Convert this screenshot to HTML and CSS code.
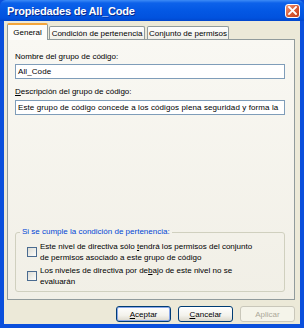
FILE: index.html
```html
<!DOCTYPE html>
<html lang="es">
<head>
	<meta charset="UTF-8">
	<meta name="viewport" content="width=device-width, initial-scale=1.0">
	<link rel="stylesheet" href="styles.css">
	<title>Propiedades de All_Code</title>
</head>
<body>
	<div class="window">
		<div class="titlebar">
			<span class="title">Propiedades de All_Code</span>
			<span class="close">
				<svg width="9" height="9" viewBox="0 0 9 9">
					<path d="M1 1L8 8M8 1L1 8" stroke="#fff" stroke-width="1.8" stroke-linecap="square"/>
				</svg>
			</span>
		</div>
		<div class="dialog">
			<div class="tabs">
				<div class="tab tab-general active">General</div>
				<div class="tab tab-cond">Condición de pertenencia</div>
				<div class="tab tab-perm">Conjunto de permisos</div>
			</div>
			<div class="panel">
				<div class="label">Nombre del grupo de código:</div>
				<div class="field">All_Code</div>
				<div class="label label-desc"><u>D</u>escripción del grupo de código:</div>
				<div class="field">Este grupo de código concede a los códigos plena seguridad y forma la</div>
				<fieldset class="group">
					<legend>Si se cumple la condición de pertenencia:</legend>
					<div class="check">
						<span class="box"></span>
						<span class="check-text">Este nivel de directiva sólo <u>t</u>endrá los permisos del conjunto<br>de permisos asociado a este grupo de código</span>
					</div>
					<div class="check">
						<span class="box"></span>
						<span class="check-text">Los niveles de directiva por de<u>b</u>ajo de este nivel no se<br>evaluarán</span>
					</div>
				</fieldset>
			</div>
			<div class="buttons">
				<div class="btn default"><u>A</u>ceptar</div>
				<div class="btn"><u>C</u>ancelar</div>
				<div class="btn disabled">Aplicar</div>
			</div>
		</div>
	</div>
</body>
</html>
```

FILE: styles.css
```css
body{
	margin:0;
	background:#fff;
	font-family:'Liberation Sans', Arial, sans-serif;
	font-size:8px;
	color:#000;
}
.window{
	width:304px;
	height:328px;
	box-sizing:border-box;
	display:flex;
	flex-direction:column;
	background:#0a4fdc;
	padding:0 4px 4px 4px;
}
.titlebar{
	height:22px;
	margin:0 -4px;
	display:flex;
	align-items:center;
	justify-content:space-between;
	padding:0 4px 0 7px;
	background:linear-gradient(#3d8bf6 0, #0d62ea 3px, #0459e5 45%, #0152de 85%, #0146cc 100%);
	border-radius:6px 6px 0 0;
}
.title{
	color:#fff;
	font-weight:bold;
	font-size:11px;
	text-shadow:1px 1px 0 #0a2a8c;
	letter-spacing:-0.2px;
}
.close{
	width:13px;
	height:12px;
	display:flex;
	align-items:center;
	justify-content:center;
	border:1px solid #fff;
	border-radius:3px;
	background:linear-gradient(135deg, #f09a7c, #d85a34 55%, #c2401c);
}
.dialog{
	flex:1;
	display:flex;
	flex-direction:column;
	background:#ece9d8;
	padding:2px 5px 2px 3px;
}
.tabs{
	height:16px;
	display:flex;
	align-items:flex-end;
}
.tab{
	height:13px;
	box-sizing:border-box;
	display:flex;
	align-items:center;
	justify-content:center;
	border:1px solid #919b9c;
	border-bottom:none;
	border-radius:2px 2px 0 0;
	background:linear-gradient(#fefefe, #f0efe8);
	margin-right:1px;
}
.tab.active{
	height:17px;
	margin-bottom:-1px;
	position:relative;
	z-index:1;
	background:#fcfcfa;
	border-top:2px solid #f3a53c;
	padding-bottom:1px;
}
.tab-general{width:41px;}
.tab-cond{width:96px;margin-right:2px;}
.tab-perm{width:82px;}
.panel{
	height:261px;
	box-sizing:border-box;
	display:flex;
	flex-direction:column;
	border:1px solid #919b9c;
	background:linear-gradient(#f9f8f3, #f1efe6);
	padding:12px 9px 7px 7px;
}
.label{
	height:10px;
	line-height:10px;
	margin-bottom:2px;
}
.label-desc{
	margin-top:8px;
	margin-bottom:3px;
}
.field{
	height:15px;
	box-sizing:border-box;
	border:1px solid #7f9db9;
	background:#fff;
	line-height:13px;
	padding-left:2px;
	white-space:nowrap;
	overflow:hidden;
	letter-spacing:0.1px;
}
.group{
	margin:auto 0 0 0;
	border:1px solid #d0d0bf;
	border-radius:3px;
	padding:4px 8px 2px 11px;
	min-width:0;
}
.group legend{
	color:#0046d5;
	padding:0 2px;
	margin-left:-7px;
	line-height:10px;
}
.check{
	display:flex;
	align-items:center;
	gap:3px;
	margin-bottom:2px;
}
.box{
	width:10px;
	height:10px;
	box-sizing:border-box;
	border:1px solid #4a6b90;
	background:linear-gradient(135deg, #dcdcd5, #fdfdfb);
	flex:none;
}
.check-text{
	line-height:11px;
}
.buttons{
	display:flex;
	justify-content:flex-end;
	gap:7px;
	margin-top:6px;
}
.btn{
	width:55px;
	height:16px;
	box-sizing:border-box;
	display:flex;
	align-items:center;
	justify-content:center;
	border:1px solid #003c74;
	border-radius:3px;
	background:linear-gradient(#fff, #f3f2ec 60%, #dcd8cb);
}
.btn.default{
	box-shadow:inset 0 0 0 1px #8aa8ea;
}
.btn.disabled{
	border-color:#c9c7ba;
	background:#f5f4ea;
	color:#aca899;
}
```
